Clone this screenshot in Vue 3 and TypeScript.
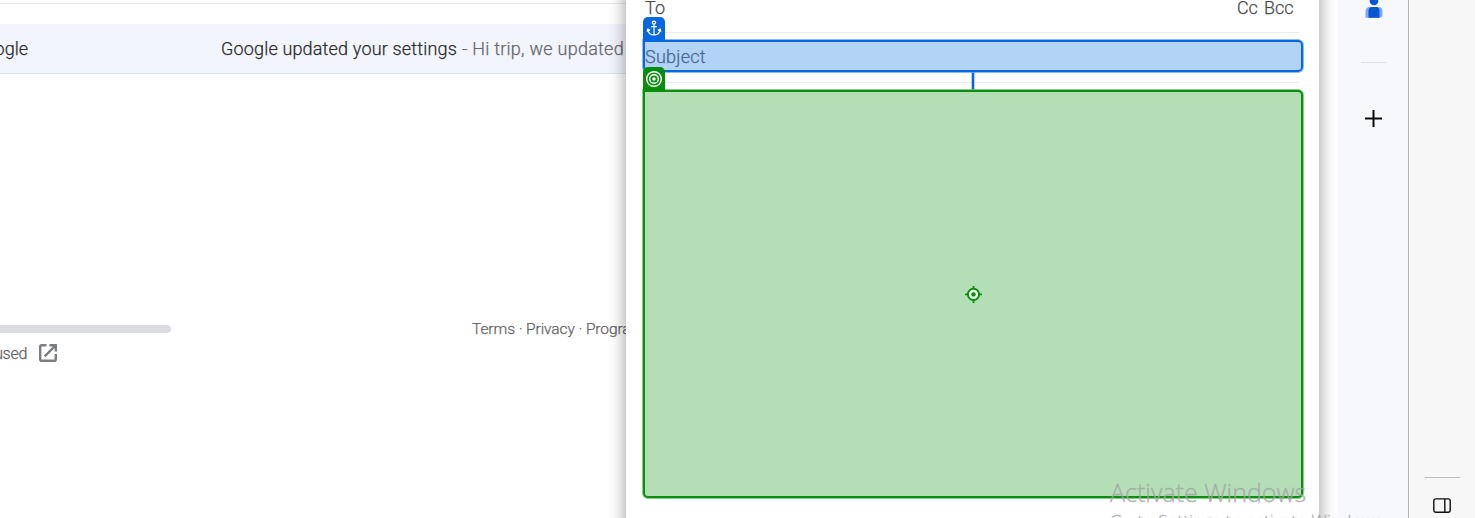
<script setup lang="ts">
const subject = 'Google updated your settings'
const snippet = 'Hi trip, we updated'
const links = 'Terms · Privacy · Program Policies'
</script>

<template>
  <div class="screen">
    <main class="mail">
      <div class="row-gap"></div>
      <div class="mail-row">
        <span class="sender"><span>Google</span></span>
        <span class="subject">{{ subject }}</span>
        <span class="snippet">&nbsp;- {{ snippet }}</span>
      </div>
      <footer class="footer">
        <div class="storage">
          <div class="bar"></div>
          <div class="usage">
            <span class="used">used</span>
            <svg width="22" height="22" viewBox="0 0 22 22" fill="none" stroke="#7b7d80" stroke-width="2.4">
              <path d="M9.5 3.2H4.8Q3.2 3.2 3.2 4.8V17.2Q3.2 18.8 4.8 18.8H17.2Q18.8 18.8 18.8 17.2V12" />
              <path d="M12.5 3.2H18.8V9.5M18.5 3.5L7.7 14.3" />
            </svg>
          </div>
        </div>
        <span class="links">{{ links }}</span>
      </footer>
    </main>
    <aside class="apps">
      <svg class="contact" width="18" height="18" viewBox="0 0 18 18">
        <path d="M5 7H13Q17.5 7 17.5 11V14.5Q17.5 17.7 14.5 17.7H.5V12Q.5 7 5 7Z" fill="#7fa6fb" />
        <path d="M7 7H11Q14.5 7 14.5 11V17.7H3.5V11Q3.5 7 7 7Z" fill="#0957d0" />
        <circle cx="9" cy="1" r="4.3" fill="#0957d0" />
      </svg>
      <div class="apps-rule"></div>
      <svg class="plus" width="18" height="18" viewBox="0 0 18 18">
        <path d="M7.5 0H9.5V7.5H17V9.5H9.5V17H7.5V9.5H0V7.5H7.5Z" fill="#0b0b0b" />
      </svg>
    </aside>
    <aside class="rail">
      <div class="rail-rule"></div>
      <svg width="18" height="16" viewBox="0 0 18 16" fill="none" stroke="#111" stroke-width="1.4">
        <rect x=".8" y=".9" width="16.4" height="13.4" rx="2" />
        <path d="M11.8 1V14.3" />
      </svg>
    </aside>

    <section class="compose">
      <div class="recipients"><span class="to">To</span><span class="cc">Cc</span><span class="bcc">Bcc</span></div>
      <div class="subject-line"><span>Subject</span></div>
    </section>

    <div class="anchor-box"></div>
    <div class="tag anchor-tag">
      <svg width="16" height="17" viewBox="0 0 16 17" fill="none" stroke="#fff" stroke-width="1.25">
        <circle cx="8" cy="2.6" r="1.6" />
        <path d="M8 4.2V15M5 6.5H11M1.8 9.2Q2.2 14.8 8 15Q13.8 14.8 14.2 9.2M1.2 11.6L1.8 9.2L4.2 10.4M14.8 11.6L14.2 9.2L11.8 10.4" />
      </svg>
    </div>
    <div class="connector"></div>
    <div class="target-box"></div>
    <div class="tag target-tag">
      <svg width="18" height="18" viewBox="0 0 18 18" fill="none" stroke="#fff" stroke-width="1.4">
        <circle cx="9" cy="9" r="7.3" />
        <circle cx="9" cy="9" r="4.3" />
        <circle cx="9" cy="9" r="1.7" fill="#fff" stroke="none" />
      </svg>
    </div>
    <svg class="crosshair" width="18" height="18" viewBox="0 0 18 18">
      <g transform="translate(.5 .4)">
        <circle cx="9" cy="9" r="5.6" fill="#e8f5e8" stroke="#078f0d" stroke-width="1.9" />
        <circle cx="9" cy="9" r="2.2" fill="#078f0d" />
        <path d="M9 .5V3.5M9 14.5V17.5M.5 9H3.5M14.5 9H17.5" stroke="#078f0d" stroke-width="1.8" />
      </g>
    </svg>
    <div class="watermark">
      <div class="wm-title">Activate Windows</div>
      <div class="wm-text">Go to Settings to activate Windows.</div>
    </div>
  </div>
</template>

<style>
body { margin: 0; background: #fff; }
</style>

<style scoped>
.screen {
  position: relative;
  display: grid;
  grid-template-columns: 1338px 70px 67px;
  width: 1476px;
  height: 518px;
  overflow: hidden;
  font-family: Roboto, "Liberation Sans", sans-serif;
  font-weight: 300;
  -webkit-text-stroke-width: .25px;
  white-space: nowrap;
}
svg { display: block; flex: none; }
.mail { overflow: hidden; background: #fff; padding-right: 30px; }
.row-gap { height: 20px; margin-top: 3px; border-top: 1px solid #e6e8ea; }
.mail-row {
  display: flex;
  align-items: center;
  height: 49px;
  background: #f2f5fc;
  border-bottom: 1px solid #dfe3e9;
  color: #2c2d30;
  font-size: 18px;
}
.sender { display: flex; justify-content: flex-end; width: 28px; margin-right: 193px; }
.subject { width: 236.5px; letter-spacing: .17px; }
.snippet { color: #66686c; letter-spacing: .26px; }
.footer { display: flex; padding-top: 247px; color: #626365; }
.storage { width: 472px; padding-top: 4px; }
.bar { width: 171px; height: 8px; border-radius: 0 4px 4px 0; background: #dadce0; }
.usage { display: flex; align-items: center; gap: 10px; margin-top: 9px; }
.used { display: flex; justify-content: flex-end; width: 27px; font-size: 16px; letter-spacing: -.3px; }
.links { font-size: 15.5px; line-height: 16px; letter-spacing: -.08px; }
.apps { display: flex; flex-direction: column; align-items: center; background: #f6f8fc; }
.contact, .plus { margin-left: 1px; }
.apps-rule { width: 25px; height: 1px; margin: 44px 0 47px 1px; background: #e0e1df; }
.rail {
  display: flex;
  flex-direction: column;
  align-items: center;
  justify-content: flex-end;
  gap: 20px;
  padding-bottom: 4px;
  height: 518px;
  box-sizing: border-box;
  border-left: 1px solid #b5b5b7;
  background: #f7f7f7;
}
.rail-rule { width: 35px; height: 1px; background: #bcbcbc; }
.compose {
  position: absolute;
  z-index: 1;
  left: 626px;
  top: -20px;
  width: 693px;
  height: 558px;
  box-sizing: border-box;
  padding: 20px 20px 0 18px;
  background: #fff;
  box-shadow: 0 2px 15px 2px rgba(0, 0, 0, .33);
  clip-path: inset(0 -19px 0 -30px);
  color: #48494c;
  font-size: 18px;
}
.recipients { display: flex; height: 32px; border-bottom: 1px solid #e8edf2; line-height: 16px; }
.to { flex: 1; padding-left: 1px; }
.cc { margin-right: 6px; font-size: 18px; }
.bcc { margin-right: 5.5px; font-size: 18px; }
.subject-line { height: 49px; border-bottom: 1px solid #e8edf2; line-height: 48px; padding-left: 1px; color: #66686c; letter-spacing: .25px; }
.anchor-box, .target-box, .tag, .connector, .crosshair, .watermark { position: absolute; z-index: 2; }
.anchor-box, .target-box { left: 643px; width: 660px; box-sizing: border-box; border-radius: 0 5px 5px 5px; }
.anchor-box { top: 40px; height: 32px; border: 2px solid #0767df; background: rgba(0, 105, 225, .3); box-shadow: 0 0 0 1px rgba(7, 103, 223, .45); }
.target-box { top: 90px; height: 408px; border: 2px solid #078f0d; background: #b4deb6; box-shadow: 0 0 0 1px rgba(7, 143, 13, .45); }
.tag { display: flex; align-items: center; justify-content: center; left: 643px; width: 22px; border-radius: 5px 5px 0 0; }
.anchor-tag { top: 17px; height: 23px; background: #0767df; }
.target-tag { top: 67px; height: 23px; background: rgba(0, 138, 5, .97); }
.connector { left: 972px; top: 73px; width: 2px; height: 16px; background: #0767df; box-shadow: 0 0 0 1px rgba(7, 103, 223, .3); }
.crosshair { left: 964px; top: 285px; }
.watermark { left: 1110px; top: 475px; font-family: "Open Sans", "Noto Sans", sans-serif; font-weight: 300; -webkit-text-stroke-width: .4px; color: rgba(165, 165, 165, .8); }
.wm-title { font-size: 25px; line-height: 34px; letter-spacing: 0; }
.wm-text { font-size: 17px; line-height: 23px; letter-spacing: .25px; }
</style>
